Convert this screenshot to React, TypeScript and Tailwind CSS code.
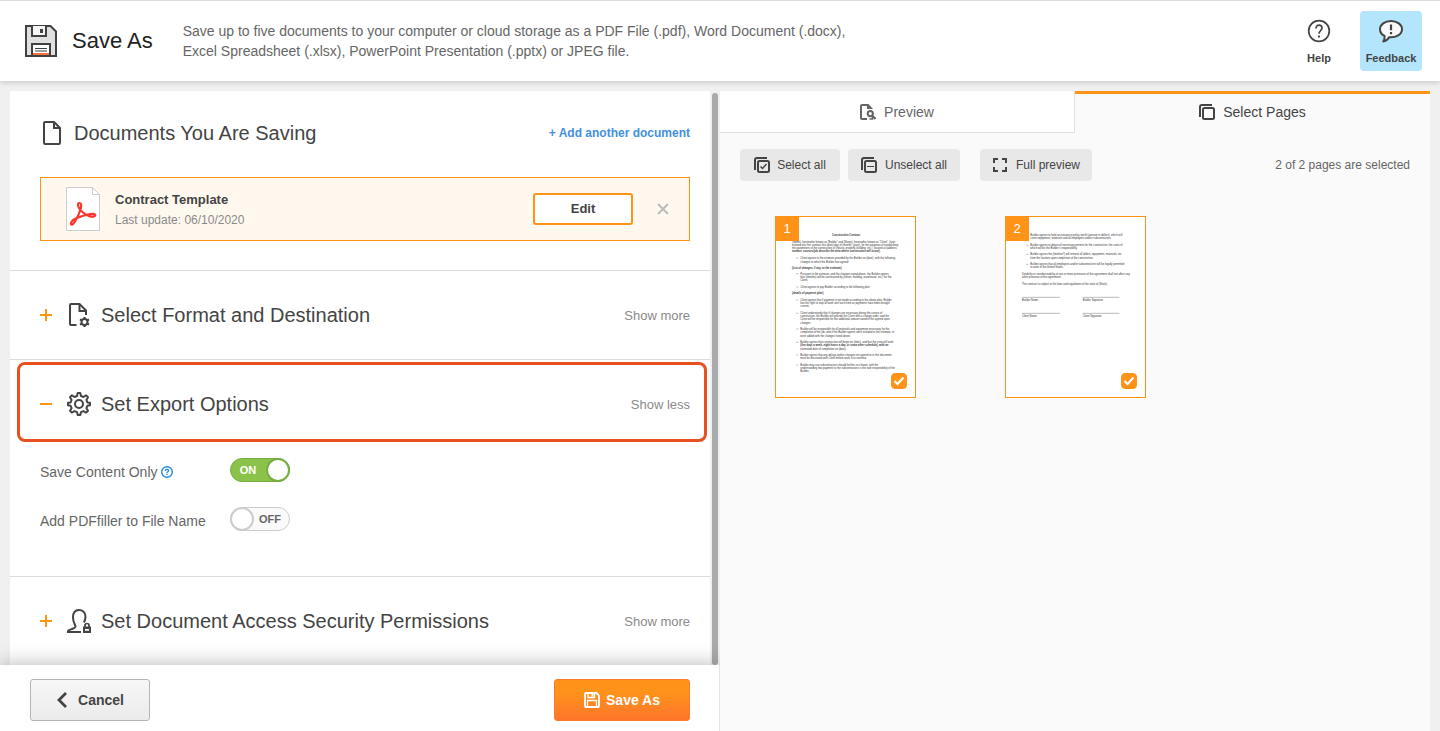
import React, { useState } from "react";

interface IconProps {
    className?: string;
}

interface SectionHeaderProps {
    title: string;
    open?: boolean;
    icon: React.ReactNode;
    onClick?: () => void;
}

interface ToggleProps {
    id: string;
    checked: boolean;
    onChange: (checked: boolean) => void;
}

interface ThumbLine {
    y: number;
    text: string;
    x?: number;
    bullet?: boolean;
    bold?: boolean;
}

//------------------------------------------------Icons-----------------------------------------------------

const FloppyIcon = ({ className }: IconProps) => (
    <svg className={className} viewBox="0 0 32 32" aria-hidden="true">
        <path d="M1 1h24.5L31 6.500V31H1z" fill="#e0e0e0" stroke="#414141" strokeWidth="2" />
        <path d="M7 1v10h14V1" fill="#f5f5f5" stroke="#414141" strokeWidth="2" />
        <path d="M15 4h3v4h-3z" fill="#414141" />
        <path d="M7 31V19h18v12" fill="#fff" stroke="#414141" strokeWidth="2" />
        <path d="M10 23.500h12M10 26h12" stroke="#414141" />
        <path d="M8 28h16v2H8z" fill="#f9703e" />
        <path d="M1 31h30" stroke="#414141" strokeWidth="2" />
    </svg>
);

const HelpIcon = ({ className }: IconProps) => (
    <svg className={className} viewBox="0 0 24 24" fill="none" stroke="currentColor" aria-hidden="true">
        <circle cx="12" cy="12" r="10.300" strokeWidth="1.700" />
        <path d="M9 9.500c0-2.200 1.300-3.400 3-3.400s3 1.200 3 3c0 2.300-3 2.600-3 5.700" strokeWidth="1.700" />
        <path d="M12 16.500v2" strokeWidth="1.900" />
    </svg>
);

const FeedbackIcon = ({ className }: IconProps) => (
    <svg className={className} viewBox="0 0 26 24" fill="none" stroke="currentColor" aria-hidden="true">
        <path
            d="M13 2C6.800 2 2 5.500 2 10.200c0 3 1.800 5.300 4.600 6.600.2 2-.1 3.700-1.300 5.700 2.700-.6 4.700-2.100 5.600-4.200 7.400.6 13.100-3 13.100-8.100C24 5.500 19.200 2 13 2z"
            fill="#f8f8f8"
            strokeWidth="2"
            strokeLinejoin="round"
        />
        <path d="M13 5.500v5.800M13 13v2.300" strokeWidth="2.200" />
    </svg>
);

const DocumentIcon = ({ className }: IconProps) => (
    <svg className={className} viewBox="0 0 24 24" fill="none" stroke="currentColor" strokeWidth="2" aria-hidden="true">
        <path d="M5 1h9l6 6v15a1 1 0 0 1-1 1H5a1 1 0 0 1-1-1V2a1 1 0 0 1 1-1z" strokeLinejoin="round" />
        <path d="M14 1v6h6" />
    </svg>
);

const PdfIcon = ({ className }: IconProps) => (
    <svg className={className} viewBox="0 0 34 44" fill="none" aria-hidden="true">
        <path d="M.5.500h26l7 7v36H.5z" fill="#fff" stroke="#ccc" />
        <path d="M26.500.500v7h7" stroke="#ccc" />
        <path
            d="M13.300 16c2 0 2.300 2.400 1.500 5.300-1.200 4.600-3.900 10-6.500 14.200-1.200 2-2.800 2.700-3.200 1.600-.6-1.700 1.300-4.200 4.700-5.600 4.500-1.900 9.500-3.500 14.200-4.300 3.600-.6 5.500 0 5.300 1.200-.3 1.600-3.500 1.600-6 .7-4-1.400-8.200-4.900-10.300-8.100-1.400-2.300-1.500-5 .3-5z"
            stroke="#f9372f"
            strokeWidth="2.200"
            strokeLinejoin="round"
        />
    </svg>
);

const GearIcon = ({ className }: IconProps) => (
    <svg className={className} viewBox="0 0 24 24" fill="none" stroke="currentColor" strokeWidth="2" strokeLinejoin="round" aria-hidden="true">
        <circle cx="12" cy="12" r="4" />
        <path d="M10.700 1h2.600l.7 3 2.500 1 2.700-1.600 1.800 1.800L19.400 7.900l1 2.500 2.600.3v2.600l-2.600.5-1 2.400 1.600 2.600-1.800 1.800-2.700-1.500-2.500 1-.7 2.900h-2.600l-.7-2.900-2.500-1-2.700 1.500L3 18.800l1.600-2.600-1-2.400L1 13.300v-2.600l2.600-.3 1-2.500L3 5.200l1.800-1.800L7.500 5 10 4z" />
    </svg>
);

const DocumentGearIcon = ({ className }: IconProps) => (
    <svg className={className} viewBox="0 0 24 24" fill="none" stroke="currentColor" strokeWidth="2" aria-hidden="true">
        <path d="M9.500 22H4a1 1 0 0 1-1-1V2a1 1 0 0 1 1-1h8.500L19 7.500V12" />
        <path d="M12.500 1v7H19" />
        <circle cx="17.500" cy="19" r="3" strokeWidth="2" />
        <path
            d="M17.500 16v-2M17.500 24v-2M20 17.500l2-1.100M13 21.600l2-1.100M20 20.500l2 1.100M13 16.400l2 1.100"
            strokeWidth="2.200"
        />
    </svg>
);

const UserLockIcon = ({ className }: IconProps) => (
    <svg className={className} viewBox="0 0 24 24" fill="none" stroke="currentColor" strokeWidth="2" aria-hidden="true">
        <path d="M14 23H1v-1c0-1.500 7.500-2 7.500-4.500 0-1.500-2.500-4-2.500-9C6 3.500 8.500 1 12 1s6.500 2.500 6.500 6.500c0 2.500-.5 4-1.500 6" />
        <path d="M16 17.500h8V24h-8zM18 20v1.800h4V20z" fill="currentColor" fillRule="evenodd" stroke="none" />
        <path d="M18 18v-1.500a2 2 0 0 1 4 0V18" strokeWidth="1.700" />
    </svg>
);

const PreviewIcon = ({ className }: IconProps) => (
    <svg className={className} viewBox="0 0 16 16" fill="none" stroke="currentColor" strokeWidth="2" aria-hidden="true">
        <path d="M7 15H2a1 1 0 0 1-1-1V2a1 1 0 0 1 1-1h6" />
        <path d="M7 0h1.500L13 5H7z" fill="currentColor" stroke="none" />
        <circle cx="10.300" cy="9.600" r="2.600" />
        <path d="m12 11.300 3.500 3.700" />
        <path d="M9.500 15h3v-2" strokeWidth="1.500" />
    </svg>
);

const PagesIcon = ({ className, children }: IconProps & { children?: React.ReactNode }) => (
    <svg className={className} viewBox="0 0 16 16" fill="none" stroke="currentColor" strokeWidth="2" aria-hidden="true">
        <path d="M1 13V3a2 2 0 0 1 2-2h10" />
        <rect x="4" y="4" width="11" height="11" rx="1.500" />
        {children}
    </svg>
);

const FullPreviewIcon = ({ className }: IconProps) => (
    <svg className={className} viewBox="0 0 16 16" fill="none" stroke="currentColor" strokeWidth="2" aria-hidden="true">
        <path d="M2 6V2h4M10 2h4v4M14 10v4h-4M6 14H2v-4" />
    </svg>
);

const SaveIcon = ({ className }: IconProps) => (
    <svg className={className} viewBox="0 0 16 16" fill="none" stroke="currentColor" strokeWidth="1.800" aria-hidden="true">
        <path d="M1 2a1 1 0 0 1 1-1h10.500L15 3.500V14a1 1 0 0 1-1 1H2a1 1 0 0 1-1-1z" />
        <path d="M4 1v4.500h6.500V1M3.500 15V8.500h9V15" strokeWidth="1.300" />
        <path d="M7.500 1h2v3.500h-2z" fill="currentColor" stroke="none" />
    </svg>
);

//------------------------------------------------Data-----------------------------------------------------

const firstPage: ThumbLine[] = [
    { y: 57, x: 168, bold: true, text: "Construction Contract" },
    { y: 78, text: "(Name), hereinafter known as “Builder” and (Name), hereinafter known as “Client”, have" },
    { y: 87, text: "entered into this contract this (date) day of (month), (year), for the purposes of establishing" },
    { y: 96, text: "the parameters of the construction of (house, property, building, etc.), located at (address," },
    { y: 106, bold: true, text: "number, sources/job describe the area where construction will occur)." },
    { y: 126, bullet: true, text: "Client agrees to the estimate provided by the Builder on (date), with the following" },
    { y: 137, x: 73, text: "changes to which the Builder has agreed:" },
    { y: 157, bold: true, text: "(List of changes, if any, to the estimate)" },
    { y: 173, bullet: true, text: "Pursuant to the estimate, and the changes noted above, the Builder agrees" },
    { y: 183, x: 73, text: "that (timeline) will be constructed by (house, building, warehouse, etc.) for the" },
    { y: 193, x: 73, text: "Client." },
    { y: 213, bullet: true, text: "Client agrees to pay Builder according to the following plan:" },
    { y: 231, bold: true, text: "(details of payment plan)" },
    { y: 252, bullet: true, text: "Client agrees that if payment is not made according to the above plan, Builder" },
    { y: 261, x: 73, text: "has the right to stop all work until such time as payments have been brought" },
    { y: 270, x: 73, text: "current." },
    { y: 292, bullet: true, text: "Client understands that if changes are necessary during the course of" },
    { y: 301, x: 73, text: "construction, the Builder will provide the Client with a change order, and the" },
    { y: 310, x: 73, text: "Client will be responsible for the additional amount owed of the agreed upon" },
    { y: 321, x: 73, text: "changes." },
    { y: 339, bullet: true, text: "Builder will be responsible for all materials and equipment necessary for the" },
    { y: 349, x: 73, text: "completion of the job, which the Builder agrees were included in the estimate, or" },
    { y: 360, x: 73, text: "were added with the changes listed above." },
    { y: 379, bullet: true, text: "Builder agrees that construction will begin on (date), and that the crew will work" },
    { y: 388, x: 73, bold: true, text: "(five days a week, eight hours a day, or some other schedule), with an" },
    { y: 399, x: 73, text: "estimated date of completion on (date)." },
    { y: 417, bullet: true, text: "Builder agrees that any delays and/or changes not agreed to in this document" },
    { y: 426, x: 73, text: "must be discussed with Client before work is to continue." },
    { y: 447, bullet: true, text: "Builder may use subcontractors should he/she so choose, with the" },
    { y: 457, x: 73, text: "understanding that payment to the subcontractors is the sole responsibility of the" },
    { y: 466, x: 73, text: "Builder." },
];

const secondPage: ThumbLine[] = [
    { y: 57, x: 73, text: "Builder agrees to hold an insurance policy worth (amount in dollars), which will" },
    { y: 67, x: 73, text: "cover equipment, materials and all employees and/or subcontractors." },
    { y: 88, bullet: true, text: "Builder agrees to obtain all necessary permits for the construction, the costs of" },
    { y: 97, x: 73, text: "which will be the Builder’s responsibility." },
    { y: 115, bullet: true, text: "Builder agrees the (timeline?) will remove all debris, equipment, materials, etc." },
    { y: 126, x: 73, text: "from the location upon completion of the construction." },
    { y: 145, bullet: true, text: "Builder agrees that all employees and/or subcontractors will be legally permitted" },
    { y: 154, x: 73, text: "to work in the United States." },
    { y: 175, text: "Disability or unenforceability of one or more provisions of this agreement shall not affect any" },
    { y: 184, text: "other provision of this agreement." },
    { y: 204, text: "This contract is subject to the laws and regulations of the state of (State)." },
    { y: 252, text: "Builder Name" },
    { y: 252, x: 230, text: "Builder Signature" },
    { y: 300, text: "Client Name" },
    { y: 300, x: 230, text: "Client Signature" },
];

const pages = [
    { number: 1, lines: firstPage, signatures: false },
    { number: 2, lines: secondPage, signatures: true },
];

//------------------------------------------------Components-----------------------------------------------------

const SectionHeader = ({ title, open = false, icon, onClick }: SectionHeaderProps) => (
    <button type="button" aria-expanded={open} onClick={onClick} className="flex h-22 w-full items-center pr-5 pl-[30px] text-left">
        <svg className="h-3 w-3 text-[#ff9318]" viewBox="0 0 12 12" stroke="currentColor" strokeWidth="2" aria-hidden="true">
            <path d={open ? "M0 6h12" : "M0 6h12M6 0v12"} />
        </svg>
        <span className="ml-[15px]">{icon}</span>
        <span className="ml-2.5 text-xl">{title}</span>
        <span className="ml-auto pt-0.5 text-[13px] text-[#8a8a8a]">{open ? "Show less" : "Show more"}</span>
    </button>
);

const Toggle = ({ id, checked, onChange }: ToggleProps) => (
    <label
        htmlFor={id}
        className={`flex h-6 w-15 cursor-pointer items-center rounded-full border text-[11px] font-bold ${
            checked ? "border-[#79ad43] bg-[#8bc34a] text-white" : "border-[#ccc] bg-[#fafafa] text-[#666]"
        }`}
    >
        <input
            id={id}
            type="checkbox"
            checked={checked}
            onChange={(e) => onChange(e.target.checked)}
            className="sr-only"
        />
        {checked && <span className="flex-1 pr-0.5 text-center">ON</span>}
        <span
            className={`-mx-px size-6 shrink-0 rounded-full border-2 bg-white ${
                checked ? "border-[#79ad43]" : "border-[#ccc]"
            }`}
        />
        {!checked && <span className="flex-1 pr-0.5 text-center">OFF</span>}
    </label>
);

const PageThumb = ({ number, lines, signatures }: (typeof pages)[number]) => {
    const [selected, setSelected] = useState<boolean>(true);

    return (
        <div className="relative border border-[#ff9318] bg-white">
            <svg className="block h-[180px] w-[139px]" viewBox="0 0 417 540" fill="#333" fontSize="8">
                {lines.map((line, idx) => (
                    <React.Fragment key={idx}>
                        {line.bullet && <path d={`M61 ${line.y - 3}h6`} stroke="#333" />}
                        <text x={line.x ?? (line.bullet ? 73 : 48)} y={line.y} fontWeight={line.bold ? 700 : 400}>
                            {line.text}
                        </text>
                    </React.Fragment>
                ))}
                {signatures && <path d="M48 241h114M230 241h110M48 289h114M230 289h110" stroke="#999" strokeWidth="2" />}
            </svg>
            <span className="absolute top-0 left-0 flex h-6 w-[23px] items-center justify-center bg-[#ff9318] pr-px text-[13px] text-white">
                {number}
            </span>
            <label className="absolute right-2 bottom-2 size-4">
                <input
                    type="checkbox"
                    aria-label={`Page ${number}`}
                    checked={selected}
                    onChange={() => setSelected(!selected)}
                    className="block size-4 appearance-none rounded border border-[#ff9318] bg-white checked:bg-[#ff9318]"
                />
                {selected && (
                    <svg className="absolute inset-0" viewBox="0 0 16 16" fill="none" stroke="#fff" strokeWidth="2.200" aria-hidden="true">
                        <path d="m3.500 8 3 3 6-6.500" />
                    </svg>
                )}
            </label>
        </div>
    );
};

const App = () => {
    const [exportOpen, setExportOpen] = useState<boolean>(true);
    const [contentOnly, setContentOnly] = useState<boolean>(true);
    const [addName, setAddName] = useState<boolean>(false);

    return (
        <div className="flex h-screen flex-col overflow-hidden bg-[#f0f0f0] font-['Liberation_Sans',Arial,sans-serif] text-[#444]">
            <header className="z-10 flex shrink-0 items-center border-t border-[#ddd] bg-white py-2.5 pr-[18px] pl-[25px] shadow-[0_1px_6px_rgba(0,0,0,0.2)]">
                <FloppyIcon className="size-8" />
                <h1 className="ml-[15px] pb-0.5 text-[22px] text-[#222]">Save As</h1>
                <p className="ml-[30px] max-w-[680px] text-sm/5 text-[#666]">
                    Save up to five documents to your computer or cloud storage as a PDF File (.pdf), Word Document (.docx),
                    Excel Spreadsheet (.xlsx), PowerPoint Presentation (.pptx) or JPEG file.
                </p>
                <div className="ml-auto flex gap-2.5 text-[11px] font-bold">
                    <button type="button" className="flex h-15 w-[62px] flex-col items-center rounded pt-2">
                        <HelpIcon className="size-6" />
                        <span className="mt-[7px]">Help</span>
                    </button>
                    <button type="button" className="flex h-15 w-[62px] flex-col items-center rounded bg-[#b3e5fc] pt-2">
                        <FeedbackIcon className="h-6 w-[26px]" />
                        <span className="mt-[7px]">Feedback</span>
                    </button>
                </div>
            </header>

            <main className="flex min-h-0 flex-1">
                <div className="flex w-1/2 flex-col">
                    <div className="flex min-h-0 flex-1 pt-2.5 pl-2.5">
                        <div className="min-w-0 flex-1 overflow-y-auto bg-white [scrollbar-width:none]">
                            <section className="border-b border-[#ddd] pr-5 pb-[29px] pl-[30px]">
                                <div className="flex h-[86px] items-center pb-0.5">
                                    <DocumentIcon className="size-6" />
                                    <h2 className="ml-2.5 text-xl">Documents You Are Saving</h2>
                                    <a href="#add" className="ml-auto text-xs font-bold text-[#4390df]">
                                        + Add another document
                                    </a>
                                </div>
                                <div className="flex h-16 items-center border border-[#ff9318] bg-[#fff8ef] pr-5 pl-[25px]">
                                    <PdfIcon className="h-11 w-[34px]" />
                                    <div className="ml-[15px] pt-0.5">
                                        <p className="text-[13px]/5 font-bold">Contract Template</p>
                                        <p className="text-xs/5 text-[#8a8a8a]">Last update: 06/10/2020</p>
                                    </div>
                                    <button
                                        type="button"
                                        className="ml-auto h-8 w-25 rounded-[3px] border-2 border-[#ff9318] bg-white text-[13px] font-bold"
                                    >
                                        Edit
                                    </button>
                                    <button type="button" aria-label="Remove document" className="ml-6 text-[#bbb]">
                                        <svg className="size-3" viewBox="0 0 12 12" stroke="currentColor" strokeWidth="2">
                                            <path d="m1 1 10 10M11 1 1 11" />
                                        </svg>
                                    </button>
                                </div>
                            </section>

                            <section className="border-b border-[#ddd]">
                                <SectionHeader
                                    title="Select Format and Destination"
                                    icon={<DocumentGearIcon className="size-6" />}
                                />
                            </section>

                            <section className="relative border-b border-[#ddd]">
                                <SectionHeader
                                    title="Set Export Options"
                                    open={exportOpen}
                                    onClick={() => setExportOpen(!exportOpen)}
                                    icon={<GearIcon className="size-6" />}
                                />
                                <div className="pointer-events-none absolute top-0.5 right-[3px] left-[7px] h-20 rounded-lg border-3 border-[#e8501f]" />
                                {exportOpen && (
                                    <div className="flex flex-col gap-[25px] pt-2.5 pb-[45px] pl-[30px] text-sm/5 text-[#666]">
                                        <div className="flex h-6">
                                            <div className="flex w-[190px] items-center pt-1">
                                                <label htmlFor="content-only">Save Content Only</label>
                                                <button type="button" aria-label="About Save Content Only" className="ml-[3px] text-[#2189e3]">
                                                    <svg className="size-3" viewBox="0 0 12 12" fill="none" stroke="currentColor">
                                                        <circle cx="6" cy="6" r="5.300" strokeWidth="1.400" />
                                                        <path d="M4.400 5c0-1 .7-1.600 1.600-1.600s1.600.5 1.600 1.400C7.600 5.800 6 5.800 6 7" strokeWidth="1.300" />
                                                        <path d="M6 7.800V9" strokeWidth="1.300" />
                                                    </svg>
                                                </button>
                                            </div>
                                            <Toggle id="content-only" checked={contentOnly} onChange={setContentOnly} />
                                        </div>
                                        <div className="flex h-6">
                                            <label htmlFor="add-name" className="w-[190px] pt-1">
                                                Add PDFfiller to File Name
                                            </label>
                                            <Toggle id="add-name" checked={addName} onChange={setAddName} />
                                        </div>
                                    </div>
                                )}
                            </section>

                            <section>
                                <SectionHeader
                                    title="Set Document Access Security Permissions"
                                    icon={<UserLockIcon className="size-6" />}
                                />
                            </section>
                        </div>
                        <div className="w-2.5 px-0.5 pt-0.5">
                            <div className="h-full rounded-full bg-[#aaa]" />
                        </div>
                    </div>

                    <footer className="z-10 flex h-[66px] shrink-0 items-center justify-between border-r border-[#e5e5e5] bg-white pt-1 pr-[29px] pl-[30px] shadow-[0_-2px_18px_rgba(0,0,0,0.25)] [clip-path:inset(-24px_0_0_0)]">
                        <button
                            type="button"
                            className="flex h-[42px] w-30 items-center justify-center rounded-[3px] border border-[#b5b5b5] bg-linear-to-b from-[#f7f7f7] to-[#ebebeb] text-sm font-bold"
                        >
                            <svg className="mr-2.5 h-4 w-3" viewBox="0 0 12 16" fill="none" stroke="currentColor" strokeWidth="2.800" aria-hidden="true">
                                <path d="M10 1 3 8l7 7" />
                            </svg>
                            Cancel
                        </button>
                        <button
                            type="button"
                            className="flex h-[42px] w-34 items-center justify-center rounded-[3px] border border-[#ff7b2b] bg-linear-to-b from-[#ff931a] from-30% to-[#ff7429] text-sm font-bold text-white"
                        >
                            <SaveIcon className="mr-1.5 size-4" />
                            Save As
                        </button>
                    </footer>
                </div>

                <div className="flex w-1/2 flex-col pt-2.5 pr-2.5">
                    <div className="flex h-[42px] shrink-0 text-sm" role="tablist">
                        <button
                            type="button"
                            role="tab"
                            className="flex w-1/2 items-center justify-center border-r border-b border-[#e0e0e0] bg-white text-[#666]"
                        >
                            <PreviewIcon className="mr-2 size-4" />
                            Preview
                        </button>
                        <button
                            type="button"
                            role="tab"
                            aria-selected="true"
                            className="flex w-1/2 items-center justify-center border-t-3 border-[#ff9318] bg-[#fafafa] pb-1"
                        >
                            <PagesIcon className="mr-2 size-4" />
                            Select Pages
                        </button>
                    </div>
                    <div className="flex-1 bg-[#fafafa]">
                        <div className="flex items-center px-5 pt-4 text-xs">
                            <button type="button" className="flex h-8 w-25 items-center justify-center gap-[7px] rounded bg-[#e8e8e8]">
                                <PagesIcon className="size-4">
                                    <path d="m6.500 9.500 2 2L12.500 7" strokeWidth="1.500" />
                                </PagesIcon>
                                Select all
                            </button>
                            <button type="button" className="ml-2 flex h-8 w-28 items-center justify-center gap-2 rounded bg-[#e8e8e8]">
                                <PagesIcon className="size-4">
                                    <path d="M6 9.500h7" strokeWidth="1" />
                                </PagesIcon>
                                Unselect all
                            </button>
                            <button type="button" className="ml-5 flex h-8 w-28 items-center justify-center gap-2 rounded bg-[#e8e8e8]">
                                <FullPreviewIcon className="size-4" />
                                Full preview
                            </button>
                            <span className="ml-auto text-[#666]">2 of 2 pages are selected</span>
                        </div>
                        <div className="flex flex-wrap gap-[89px] px-[55px] pt-[35px]">
                            {pages.map((page) => (
                                <PageThumb key={page.number} {...page} />
                            ))}
                        </div>
                    </div>
                </div>
            </main>
        </div>
    );
};

export default App;
